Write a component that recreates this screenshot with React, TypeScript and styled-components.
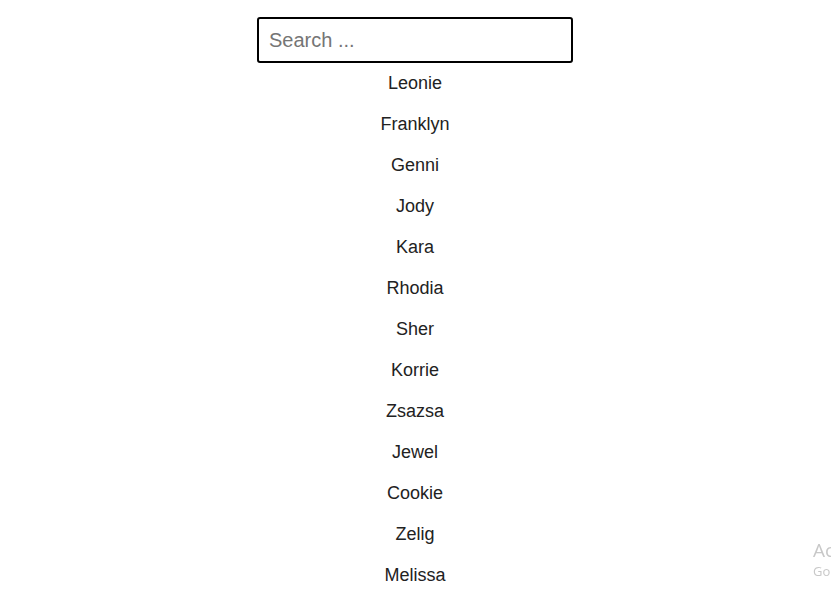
import React, { useState } from "react";
import styled, { createGlobalStyle } from "styled-components";

const Global = createGlobalStyle`
  html, body { margin: 0; padding: 0; background: #fff; overflow: hidden; }
  body { font-family: "Liberation Sans", Arial, sans-serif; }
`;

const Page = styled.div`
  display: flex;
  flex-direction: column;
  align-items: center;
  padding: 17px 1px 0 0;
`;

const SearchInput = styled.input`
  box-sizing: border-box;
  width: 316px;
  height: 46px;
  border: 2px solid #000;
  border-radius: 3px;
  padding: 0 10px;
  font-family: "Liberation Sans", Arial, sans-serif;
  font-size: 20px;
  color: #222;
  outline: none;
  &::placeholder { color: #757575; }
`;

const List = styled.ul`
  list-style: none;
  margin: 0;
  padding: 0;
  display: flex;
  flex-direction: column;
  align-items: center;
`;

const Item = styled.li`
  height: 41px;
  line-height: 41px;
  font-size: 18px;
  color: #222;
  text-align: center;
`;

const Watermark = styled.div`
  position: fixed;
  left: 813px;
  top: 538px;
  font-family: "Open Sans", "Noto Sans", sans-serif;
  color: #c8c8c8;
  white-space: nowrap;
  pointer-events: none;
`;

const WmTitle = styled.div`
  font-size: 19px;
  line-height: 24px;
`;

const WmSub = styled.div`
  font-size: 13px;
  line-height: 18px;
`;

const names = [
  "Leonie", "Franklyn", "Genni", "Jody", "Kara", "Rhodia", "Sher",
  "Korrie", "Zsazsa", "Jewel", "Cookie", "Zelig", "Melissa",
];

export default function App() {
  const [q, setQ] = useState("");
  const shown = names.filter((n) => n.toLowerCase().includes(q.toLowerCase()));
  return (
    <>
      <Global />
      <Page>
        <SearchInput placeholder="Search ..." value={q} onChange={(e) => setQ(e.target.value)} />
        <List>
          {shown.map((n) => (
            <Item key={n}>{n}</Item>
          ))}
        </List>
      </Page>
      <Watermark>
        <WmTitle>Activate Windows</WmTitle>
        <WmSub>Go to Settings to activate Windows.</WmSub>
      </Watermark>
    </>
  );
}
